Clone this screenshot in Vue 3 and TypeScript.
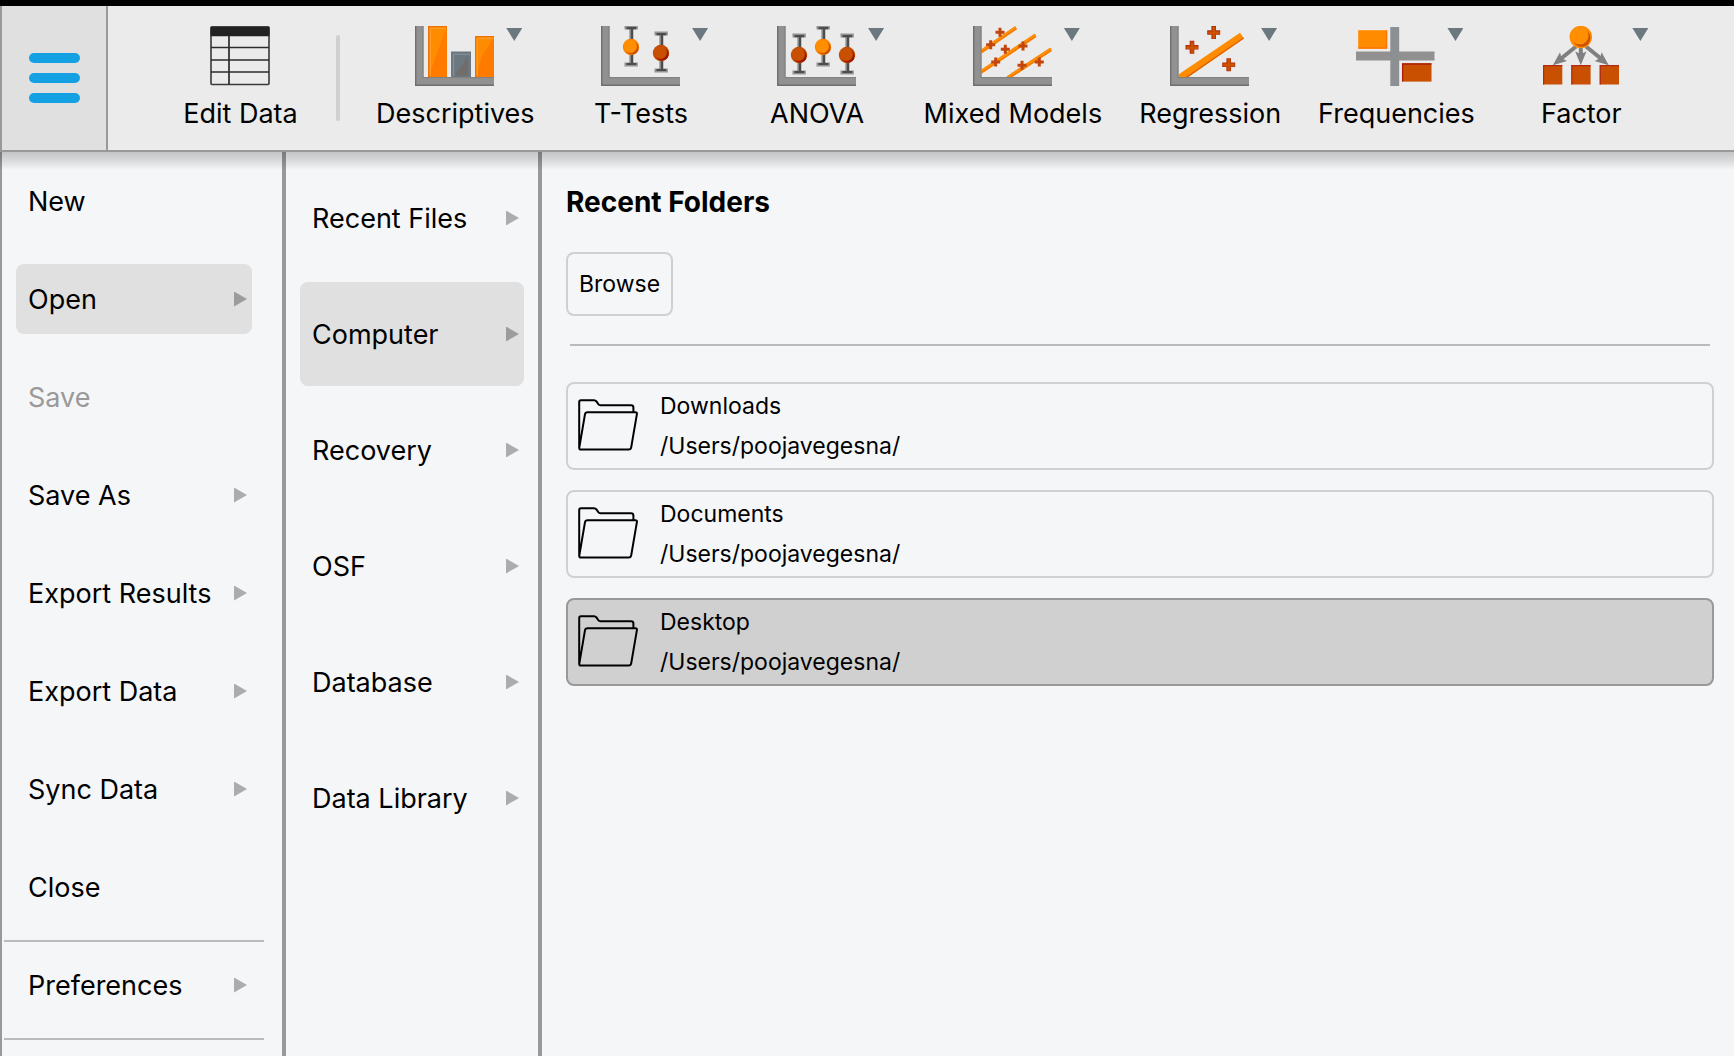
<script setup lang="ts">
import { ref } from 'vue'

interface Module {
  id: string
  label: string
}

interface MenuEntry {
  label: string
  arrow?: boolean
  disabled?: boolean
  ruled?: boolean
}

interface Folder {
  name: string
  path: string
}

const modules: Module[] = [
  { id: 'descriptives', label: 'Descriptives' },
  { id: 'ttests', label: 'T-Tests' },
  { id: 'anova', label: 'ANOVA' },
  { id: 'mixed', label: 'Mixed Models' },
  { id: 'regression', label: 'Regression' },
  { id: 'frequencies', label: 'Frequencies' },
  { id: 'factor', label: 'Factor' },
]

const fileMenu: MenuEntry[] = [
  { label: 'New' },
  { label: 'Open', arrow: true },
  { label: 'Save', disabled: true },
  { label: 'Save As', arrow: true },
  { label: 'Export Results', arrow: true },
  { label: 'Export Data', arrow: true },
  { label: 'Sync Data', arrow: true },
  { label: 'Close', ruled: true },
  { label: 'Preferences', arrow: true, ruled: true },
]

const sources: string[] = ['Recent Files', 'Computer', 'Recovery', 'OSF', 'Database', 'Data Library']

const folders: Folder[] = [
  { name: 'Downloads', path: '/Users/poojavegesna/' },
  { name: 'Documents', path: '/Users/poojavegesna/' },
  { name: 'Desktop', path: '/Users/poojavegesna/' },
]

const whiskers: Record<string, { x: number; y: number; hot: boolean }[]> = {
  ttests: [
    { x: 30, y: 21, hot: true },
    { x: 60, y: 27, hot: false },
  ],
  anova: [
    { x: 22, y: 29, hot: false },
    { x: 46, y: 21, hot: true },
    { x: 70, y: 29, hot: false },
  ],
}

const axisIcons = ['descriptives', 'ttests', 'anova', 'mixed', 'regression']

const activeMenu = ref('Open')
const activeSource = ref('Computer')
const activeFolder = ref('Desktop')
</script>

<template>
  <div class="app">
    <header class="toolbar">
      <button class="menu-button" type="button" aria-label="Main menu">
        <span class="bar"></span>
        <span class="bar"></span>
        <span class="bar"></span>
      </button>

      <nav class="ribbon" aria-label="Analyses">
        <button class="module" type="button">
          <svg class="icon" viewBox="0 0 80 60" aria-hidden="true">
            <rect x="10" y="1" width="58" height="57.5" rx="1" fill="none" stroke="#3a3a3a" stroke-width="1.6" />
            <rect x="9.5" y="0.5" width="59" height="9.8" rx="1" fill="#222" />
            <path d="M10 21.5H68M10 34H68M10 46H68M28 10V58" stroke="#2c2c2c" stroke-width="1.7" />
          </svg>
          <span>Edit Data</span>
        </button>
        <span class="divider"></span>

        <button v-for="m in modules" :key="m.id" class="module" type="button">
          <span class="figure">
            <svg class="icon" viewBox="0 0 80 60" aria-hidden="true">
              <template v-if="m.id === 'mixed'">
                <path d="M8 25.7L43 1.7M8 46L62.5 9.3M34.5 52L78 23.3" stroke="#f57c00" stroke-width="3.8" />
                <path d="M8 24.9L43 .9M8 45.2L62.5 8.5M34.5 51.2L78 22.5" stroke="#ff9208" stroke-width="1.6" />
                <path
                  d="M27 1.7v9M22.5 6.2h9M17.7 14.2v9M13.2 18.7h9M32.3 18.8v9M27.8 23.3h9M50 15.5v9M45.5 20h9M22.7 31.5v9M18.2 36h9M49 34.8v9M44.5 39.3h9M66.3 31.5v9M61.8 36h9"
                  stroke="#c2460c"
                  stroke-width="3"
                />
              </template>

              <template v-if="m.id === 'regression'">
                <path d="M8.5 48.5L70 6.8L74 12.6L17.5 51.5H8.5Z" fill="#ff8c00" />
                <path d="M74 12.6L17.5 51.5H15L73.3 11.5Z" fill="#d96400" />
                <path
                  d="M43.7 0v13M37.2 6.5h13M22 14.8v13M15.5 21.3h13M58.7 32.2v13M52.2 38.7h13"
                  stroke="#b0300c"
                  stroke-width="4.6"
                />
                <path
                  d="M43.9 1v11.5M38.2 6.8h11.5M22.2 15.8v11.5M16.5 21.6h11.5M58.9 33.2v11.5M53.2 39h11.5"
                  stroke="#cc5200"
                  stroke-width="2.8"
                />
              </template>

              <template v-if="axisIcons.includes(m.id)">
                <path d="M0 0H8.5V51.5H79V60H0Z" fill="#919191" />
                <path d="M0 0H1.4V58.6H79V60H0Z" fill="#6f6f6f" />
                <path d="M8 0V51.6H79" fill="none" stroke="#7c7c7c" stroke-width="1" />
              </template>

              <template v-if="m.id === 'descriptives'">
                <rect x="13" y="0" width="19" height="51" fill="#ff8c00" />
                <path d="M32 0V51H13.5L21 30Z" fill="#ff7b00" />
                <path d="M13.7 51V.7H32" fill="none" stroke="#f07000" stroke-width="1.2" />
                <path d="M15.3 50V2.3H31" fill="none" stroke="#ffa640" stroke-width=".9" />
                <rect x="36" y="25.5" width="20" height="25.5" fill="#6c777f" />
                <path d="M53 30V49.5H40Z" fill="#716d6a" />
                <path d="M38.5 50V28.3H55" fill="none" stroke="#8b959c" stroke-width=".9" />
                <rect x="60" y="10" width="19" height="41" fill="#ff8c00" />
                <path d="M79 11V51H60.5L67 30Z" fill="#ff7b00" />
                <path d="M60.7 51V10.7H79" fill="none" stroke="#f07000" stroke-width="1.2" />
                <path d="M62.3 50V12.3H78" fill="none" stroke="#ffa640" stroke-width=".9" />
              </template>

              <g v-for="(w, i) in whiskers[m.id] ?? []" :key="i" :transform="`translate(${w.x} ${w.y})`">
                <path d="M-6.5-19.5H6.8M-6.5 17.5H6.8M.3-19.5V17.5" stroke="#929292" stroke-width="4" />
                <path d="M-4.5-18.8H5.2M-4.5 17H5.2M1-18.8V17" stroke="#4c4c4c" stroke-width="2.2" />
                <circle r="8.2" :fill="w.hot ? '#ff8200' : '#c24a00'" />
                <circle cx="1" cy="1" r="6.6" :fill="w.hot ? '#c85000' : '#9c1600'" />
                <circle cx="-.6" cy="-.6" r="6.5" :fill="w.hot ? '#ff8f00' : '#c85000'" />
              </g>

              <template v-if="m.id === 'frequencies'">
                <rect x="0" y="25.5" width="78.5" height="9" fill="#919191" />
                <rect x="34.3" y="1" width="8.9" height="59" fill="#8c9092" />
                <rect x="2.2" y="4.2" width="29" height="18.5" fill="#ff8c00" />
                <path d="M30.5 4.5V22H2.5" fill="none" stroke="#ff7400" stroke-width="1.4" />
                <rect x="46" y="37.3" width="29.5" height="18.3" fill="#c85000" />
                <path d="M46.6 55.5V38H75.5" fill="none" stroke="#ad1c10" stroke-width="1.3" />
              </template>

              <template v-if="m.id === 'factor'">
                <path d="M35 20.5L18 34.2M39.8 20V30M45 20.5L62 34.2" stroke="#808080" stroke-width="4" />
                <path d="M39.8 39.3L34.2 25.5L39.8 28L45.4 25.5Z" fill="#808080" />
                <path
                  d="M39.8 39.3L34.2 25.5L39.8 28L45.4 25.5Z"
                  fill="#808080"
                  transform="translate(-28 0) rotate(51 39.8 39.3)"
                />
                <path
                  d="M39.8 39.3L34.2 25.5L39.8 28L45.4 25.5Z"
                  fill="#808080"
                  transform="translate(28 0) rotate(-51 39.8 39.3)"
                />
                <circle cx="39.8" cy="11" r="11.2" fill="#ff8a00" />
                <circle cx="40.6" cy="12" r="8.8" fill="#c85000" />
                <circle cx="38.8" cy="9.8" r="8.8" fill="#ff8f00" />
                <g fill="#c85000">
                  <rect x="2" y="39" width="19.3" height="19.5" />
                  <rect x="30.3" y="39" width="19.3" height="19.5" />
                  <rect x="58.7" y="39" width="19.3" height="19.5" />
                </g>
                <path
                  d="M2.6 58.5V39.6H21.3M30.9 58.5V39.6H49.6M59.3 58.5V39.6H78"
                  fill="none"
                  stroke="#b32a14"
                  stroke-width="1.2"
                />
              </template>
            </svg>
            <span class="caret"></span>
          </span>
          <span>{{ m.label }}</span>
        </button>
      </nav>
    </header>

    <main class="workspace">
      <nav class="column file-menu" aria-label="File">
        <template v-for="entry in fileMenu" :key="entry.label">
          <button
            class="entry"
            :class="{ active: entry.label === activeMenu }"
            type="button"
            :disabled="entry.disabled"
            @click="activeMenu = entry.label"
          >
            <span class="entry-label">{{ entry.label }}</span>
            <span v-if="entry.arrow" class="arrow"></span>
          </button>
          <hr v-if="entry.ruled" class="rule" />
        </template>
      </nav>

      <nav class="column sources" aria-label="Open from">
        <button
          v-for="s in sources"
          :key="s"
          class="entry tall"
          :class="{ active: s === activeSource }"
          type="button"
          @click="activeSource = s"
        >
          <span class="entry-label">{{ s }}</span>
          <span class="arrow"></span>
        </button>
      </nav>

      <section class="content">
        <h1 class="title">Recent Folders</h1>
        <button class="browse" type="button">Browse</button>
        <hr class="separator" />
        <div class="folders">
          <button
            v-for="f in folders"
            :key="f.name"
            class="folder"
            :class="{ active: f.name === activeFolder }"
            type="button"
            @click="activeFolder = f.name"
          >
            <svg class="folder-icon" viewBox="0 0 60 54" aria-hidden="true">
              <path
                d="M1.2 49V3Q1.2 1.2 3 1.2H16Q17.6 1.2 18.4 2.4L20.4 5.3Q21 6.3 22.4 6.3H53Q55.4 6.3 55.4 8.6V13M9.5 13.2H57.3Q59.2 13.2 58.9 15.2L53.2 48.4Q52.8 50.6 50.8 50.6H3Q1 50.6 1.3 48.6L7 15.2Q7.4 13.2 9.5 13.2Z"
                fill="none"
                stroke="#000"
                stroke-width="2"
                stroke-linejoin="round"
              />
            </svg>
            <span class="folder-text">
              <span>{{ f.name }}</span>
              <span>{{ f.path }}</span>
            </span>
          </button>
        </div>
      </section>
    </main>
  </div>
</template>

<style>
body {
  margin: 0;
  background: #f5f6f8;
}
</style>

<style scoped>
.app {
  display: flex;
  flex-direction: column;
  box-sizing: border-box;
  min-height: 100vh;
  border-top: 6px solid #000;
  background: #f5f6f8;
  color: #000;
  font-family: Inter, "Liberation Sans", sans-serif;
  font-size: 27px;
  line-height: 34px;
}

button {
  margin: 0;
  padding: 0;
  border: 0;
  background: none;
  color: inherit;
  font: inherit;
  white-space: nowrap;
}

.toolbar {
  position: relative;
  display: flex;
  height: 144px;
  border-bottom: 2px solid #999;
  border-left: 2px solid #999;
  background: #ebebeb;
}

.toolbar::after {
  content: "";
  position: absolute;
  top: 146px;
  right: 0;
  left: -2px;
  height: 18px;
  background: linear-gradient(rgba(0, 0, 0, 0.2), rgba(0, 0, 0, 0.12) 45%, rgba(0, 0, 0, 0));
  pointer-events: none;
}

.menu-button {
  display: flex;
  flex: none;
  flex-direction: column;
  align-items: center;
  justify-content: center;
  gap: 10px;
  width: 106px;
  border-right: 2px solid #999;
  background: #e0e0e0;
}

.bar {
  width: 51px;
  height: 10px;
  border-radius: 5px;
  background: #14a1e3;
}

.ribbon {
  display: flex;
  flex: 1;
  align-items: flex-start;
  gap: 19px;
  min-width: 0;
  padding: 20px 0 0 54px;
}

.module {
  display: flex;
  flex: none;
  flex-direction: column;
  align-items: center;
  gap: 11px;
  min-width: 157px;
  padding: 0 9px;
}

.figure {
  position: relative;
  display: flex;
}

.icon {
  display: block;
  width: 80px;
  height: 60px;
}

.caret {
  position: absolute;
  top: 2px;
  left: 91px;
  width: 16px;
  height: 13px;
  background: #6c7880;
  clip-path: polygon(0 0, 100% 0, 50% 100%);
}

.divider {
  flex: none;
  width: 4px;
  height: 86px;
  margin: 9px 8px 0 -2px;
  border-radius: 2px;
  background: #d0d0d0;
}

.workspace {
  display: flex;
  flex: 1;
}

.column {
  display: flex;
  flex: none;
  flex-direction: column;
  box-sizing: border-box;
  border-right: 4px solid #999;
}

.file-menu {
  gap: 28px;
  width: 286px;
  padding: 14px 30px 14px 14px;
  border-left: 2px solid #999;
}

.sources {
  gap: 12px;
  width: 256px;
  padding: 14px;
}

.entry {
  display: flex;
  flex: none;
  align-items: center;
  justify-content: space-between;
  height: 70px;
  padding: 0 5px 0 12px;
  border-radius: 8px;
}

.entry.tall {
  height: 104px;
}

.entry:disabled {
  color: #999;
}

.entry.active {
  background: #e0e0e0;
}

.entry-label {
  padding-top: 2px;
}

.arrow {
  width: 13px;
  height: 15px;
  background: rgba(0, 0, 0, 0.3);
  clip-path: polygon(0 0, 100% 50%, 0 100%);
}

.rule {
  flex: none;
  width: 260px;
  height: 2px;
  margin: -10px 0 -20px -12px;
  border: 0;
  background: #bbb;
}

.content {
  flex: 1;
  min-width: 0;
  padding: 32px 20px 32px 24px;
}

.title {
  margin: 0;
  font-size: 28px;
  font-weight: 700;
  line-height: 36px;
}

.browse {
  display: block;
  height: 64px;
  margin-top: 32px;
  padding: 0 11px;
  border: 2px solid #d0d0d0;
  border-radius: 8px;
  font-size: 23px;
}

.separator {
  height: 2px;
  margin: 28px 4px 36px;
  border: 0;
  background: #bbb;
}

.folders {
  display: flex;
  flex-direction: column;
  gap: 20px;
}

.folder {
  display: flex;
  align-items: center;
  gap: 22px;
  height: 88px;
  padding: 0 10px;
  border: 2px solid #d0d0d0;
  border-radius: 8px;
  font-size: 23px;
  line-height: 40px;
  text-align: left;
}

.folder.active {
  border-color: #999;
  background: #d0d0d0;
}

.folder-icon {
  flex: none;
  width: 60px;
  height: 54px;
}

.folder-text {
  display: flex;
  flex-direction: column;
}
</style>
